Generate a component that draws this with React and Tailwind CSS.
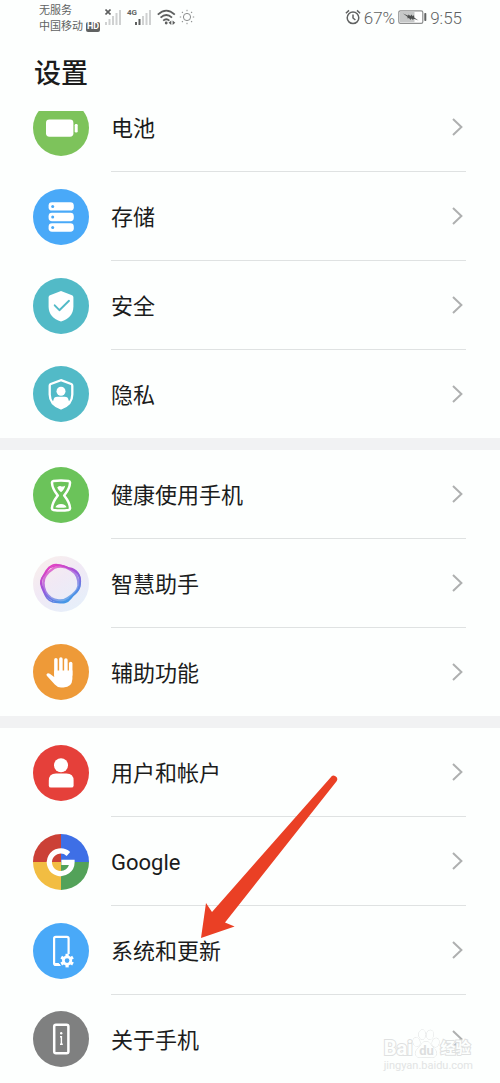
import React from "react";

const SHIELD = "M28 13 L39 17.2 Q40.4 17.8 40.4 19.4 V28.5 C40.4 36 35.8 41 28 43.6 C20.2 41 15.6 36 15.6 28.5 V19.4 Q15.6 17.8 17 17.2 Z";

function Disc({ color, children }) {
  return (
    <svg viewBox="0 0 56 56" className="size-14 shrink-0" aria-hidden="true">
      <circle cx="28" cy="28" r="28" fill={color} />
      {children}
    </svg>
  );
}

const BatteryIcon = () => (
  <Disc color="#7dc35b">
    <rect x="13" y="19.5" width="27.4" height="17.2" rx="3.4" fill="#fff" />
    <rect x="41.7" y="24" width="3" height="8.4" rx="1.2" fill="#fff" />
  </Disc>
);

const StorageIcon = () => (
  <Disc color="#49a9f8">
    {[13.2, 23.8, 34.3].map((y) => (
      <g key={y}>
        <rect x="15.6" y={y} width="25.2" height="8.4" rx="3.4" fill="#fff" />
        <circle cx="19.7" cy={y + 4.2} r="1.5" fill="#49a9f8" />
      </g>
    ))}
  </Disc>
);

const SecurityIcon = () => (
  <Disc color="#52bac7">
    <path d={SHIELD} fill="#fff" />
    <path d="M21.7 27.3 L26.4 32.2 L36 22.8" fill="none" stroke="#52bac7" strokeWidth="1.9" strokeLinecap="round" strokeLinejoin="round" />
  </Disc>
);

const PrivacyIcon = () => (
  <Disc color="#52bac7">
    <path d="M28 14.2 L38.2 18 Q39.3 18.5 39.3 19.8 V28.5 C39.3 35.4 35.2 39.8 28 42.4 C20.8 39.8 16.7 35.4 16.7 28.5 V19.8 Q16.7 18.5 17.8 18 Z" fill="none" stroke="#fff" strokeWidth="2.3" />
    <circle cx="28" cy="25.2" r="4.5" fill="#fff" />
    <path d="M20.4 34.2 Q20.8 30.8 24.4 30.8 H31.6 Q35.2 30.8 35.6 34.2 L36.6 36.4 Q33 40.6 28 42.6 Q23 40.6 19.4 36.4 Z" fill="#fff" />
  </Disc>
);

const HourglassIcon = () => (
  <Disc color="#6bc35a">
    <path d="M20.4 14 Q28 12.9 35.6 14 Q37.2 14.3 37 16 C36.7 21.8 34.4 24.4 31.2 28.5 C34.4 32.6 36.7 35.2 37 41 Q37.2 42.7 35.6 43 Q28 44.1 20.4 43 Q18.8 42.7 19 41 C19.3 35.2 21.6 32.6 24.8 28.5 C21.6 24.4 19.3 21.8 19 16 Q18.8 14.3 20.4 14 Z" fill="none" stroke="#fff" strokeWidth="2.5" strokeLinejoin="round" />
    <path d="M24.2 20.5 Q26.5 18.5 28.5 19.4 Q31 20 32.2 18.6 Q31.8 22.4 28 25.2 Q25.3 23.3 24.2 20.5 Z" fill="#fff" />
    <path d="M22.4 40.2 Q23.4 37.4 28 37 Q32.6 37.4 33.6 40.2 Q28 41.2 22.4 40.2 Z" fill="#fff" />
  </Disc>
);

const AssistantIcon = () => (
  <svg viewBox="0 0 56 56" className="size-14 shrink-0" aria-hidden="true">
    <defs>
      <linearGradient id="halo" x1="0" y1="0" x2="0.7" y2="1">
        <stop offset="0" stopColor="#faf0ea" />
        <stop offset="0.5" stopColor="#f1e9f5" />
        <stop offset="1" stopColor="#e6effa" />
      </linearGradient>
      <linearGradient id="ring" x1="0.2" y1="0" x2="0.75" y2="1">
        <stop offset="0" stopColor="#e83fc0" />
        <stop offset="0.45" stopColor="#9a55dc" />
        <stop offset="1" stopColor="#3a9fe8" />
      </linearGradient>
    </defs>
    <circle cx="28" cy="28" r="28" fill="url(#halo)" />
    <g fill="none" stroke="url(#ring)">
      <path d="M19 9.5 C25 6.5 29 10.5 36 12 C44 13 48 19 47 27 C47 35 42 36 38 42 C33 49 27 46 20 46 C13 44 12 38 9 32 C5 24 11 20 13 15 C15 12 16 10.5 19 9.5 Z" strokeWidth="1.6" />
      <path d="M20 10.5 C28 7.5 33 11 38 13 C45 16 49 22 46.5 31 C45 37 41 38 36 43 C31 47 25 46.5 20 44.5 C13 41 11 36 9 30 C6 22 13 18 15 13.5 C16 12 18 11 20 10.5 Z" strokeWidth="1.6" />
      <path d="M21 12 C27 9.5 32 10 38 14 C43 17 46 23 45.5 30 C44 37 38 40 34 42.5 C29 46 22 44.5 18 42 C12 38 10.5 32 10.5 27 C10 21 15 16 21 12 Z" strokeWidth="2.4" opacity="0.75" />
    </g>
  </svg>
);

const HandIcon = () => (
  <Disc color="#ee9a38">
    <g fill="none" stroke="#fff" strokeWidth="3.5" strokeLinecap="round">
      <path d="M22.9 15.8 V31" />
      <path d="M27.9 15 V30" />
      <path d="M32.9 16 V30" />
      <path d="M37.7 19.5 V31" />
    </g>
    <path d="M21.2 26.5 H39.4 V35 Q39 43.4 30.5 43.4 H28 Q24.2 43.4 21.8 40.5 L13.8 31.8 Q12.8 30.3 14.3 29.4 Q15.4 28.8 16.8 29.7 L21.2 33 Z" fill="#fff" />
  </Disc>
);

const UserIcon = () => (
  <Disc color="#e5403a">
    <circle cx="28" cy="20.2" r="7" fill="#fff" />
    <path d="M15.8 35.8 Q15.8 28.6 23 28.6 H33.4 Q40.6 28.6 40.6 35.8 V40.4 Q40.6 42.6 38.4 42.6 H18 Q15.8 42.6 15.8 40.4 Z" fill="#fff" />
  </Disc>
);

const GoogleIcon = () => (
  <svg viewBox="0 0 56 56" className="size-14 shrink-0" aria-hidden="true">
    <path d="M28 28 V0 A28 28 0 0 0 0 28 Z" fill="#cb4036" />
    <path d="M28 28 H56 A28 28 0 0 0 28 0 Z" fill="#3e6fe6" />
    <path d="M28 28 V56 A28 28 0 0 0 56 28 Z" fill="#53a259" />
    <path d="M28 28 H0 A28 28 0 0 0 28 56 Z" fill="#f2bd42" />
    <path d="M35.4 20 A11.3 11.3 0 1 0 39 28.4 H28.4" fill="none" stroke="#fff" strokeWidth="5.2" />
  </svg>
);

const SystemIcon = () => (
  <Disc color="#49a9f8">
    <path d="M35.6 31 V15.5 Q35.6 13.8 33.9 13.8 H22.8 Q21.1 13.8 21.1 15.5 V40.3 Q21.1 42 22.8 42 H27" fill="none" stroke="#fff" strokeWidth="2.2" />
    <path d="M21 40 H25.6 L28 43.1 H23 Z" fill="#fff" />
    <circle cx="34.1" cy="37.6" r="6.6" fill="#49a9f8" />
    <circle cx="34.1" cy="37.6" r="3.7" fill="none" stroke="#fff" strokeWidth="2.7" />
    <g stroke="#fff" strokeWidth="3.2">
      {[0, 60, 120, 180, 240, 300].map((a) => (
        <path key={a} d="M34.1 33.6 V30.8" transform={`rotate(${a} 34.1 37.6)`} />
      ))}
    </g>
  </Disc>
);

const AboutIcon = () => (
  <Disc color="#7f8080">
    <rect x="21.2" y="13.8" width="14.2" height="28.4" rx="1.8" fill="none" stroke="#fff" strokeWidth="2.5" />
    <circle cx="28.2" cy="22.2" r="1.2" fill="#fff" />
    <path d="M27 25.8 H28.4 V33.2 M27 33.2 H29.8" fill="none" stroke="#fff" strokeWidth="1.4" />
  </Disc>
);

const GROUPS = [
  [
    ["电池", BatteryIcon],
    ["存储", StorageIcon],
    ["安全", SecurityIcon],
    ["隐私", PrivacyIcon],
  ],
  [
    ["健康使用手机", HourglassIcon],
    ["智慧助手", AssistantIcon],
    ["辅助功能", HandIcon],
  ],
  [
    ["用户和帐户", UserIcon],
    ["Google", GoogleIcon],
    ["系统和更新", SystemIcon],
    ["关于手机", AboutIcon],
  ],
];

function Row({ label, Icon }) {
  return (
    <li className="group">
      <a href="#" className="flex items-center gap-[22px] pr-[34px] pl-[33px]">
        <Icon />
        <span className="flex h-[89px] flex-1 items-center justify-between border-b border-[#dfe2e2] group-last:h-[88px] group-last:border-b-0">
          <span className="pt-1 text-[22px] leading-8">{label}</span>
          <svg viewBox="0 0 16 24" className="h-6 w-4" fill="none" stroke="#aeb0b0" strokeWidth="2" aria-hidden="true">
            <path d="M3 4 L11.4 12 L3 20" />
          </svg>
        </span>
      </a>
    </li>
  );
}

function Signal({ active }) {
  return (
    <svg viewBox="0 0 17 16" className="h-4 w-[17px]" aria-hidden="true">
      {[3, 6, 9, 12, 15].map((h, i) => (
        <rect key={h} x={i * 3.5} y={16 - h} width="2" height={h} fill={i < active ? "#5d5f5f" : "#cfd1d1"} />
      ))}
    </svg>
  );
}

function StatusBar() {
  return (
    <div className="flex h-[34px] items-center justify-between pr-[38px] pl-[39px] text-[#606262]">
      <div className="flex items-center">
        <div className="pt-[3px] text-[11px] leading-4">
          <div>无服务</div>
          <div className="flex items-center gap-[3px]">
            <span>中国移动</span>
            <span className="flex h-[10px] w-[14px] items-center justify-center rounded-xs bg-[#606262] text-[9px] leading-none font-bold text-white">HD</span>
          </div>
        </div>
        <div className="relative ml-[5px] flex">
          <svg viewBox="0 0 6 6" className="absolute top-0 left-0 size-[6px]" stroke="#5d5f5f" strokeWidth="1.6" aria-hidden="true">
            <path d="M0.5 0.5 L5.5 5.5 M5.5 0.5 L0.5 5.5" />
          </svg>
          <Signal active={0} />
        </div>
        <div className="relative ml-[5px] flex pl-2">
          <span className="absolute top-0 left-0 text-[8px] leading-none font-bold">4G</span>
          <Signal active={2} />
        </div>
        <svg viewBox="0 0 19 16" className="ml-[5px] h-4 w-[19px]" fill="none" stroke="#5d5f5f" strokeWidth="1.8" aria-hidden="true">
          <path d="M0.8 5.6 Q9.3 -2.4 17.8 5.6" />
          <path d="M3.6 8.7 Q9.3 3.4 15 8.7" />
          <path d="M6.2 11.6 Q9.3 8.9 12.4 11.6" />
          <circle cx="9.2" cy="14" r="1.4" fill="#5d5f5f" stroke="none" />
          <path d="M14.3 11.5 L11.6 13.8 L14.3 16 Z M15.6 11.5 L18.3 13.8 L15.6 16 Z" fill="#5d5f5f" stroke="none" />
        </svg>
        <svg viewBox="0 0 16 16" className="ml-[3px] size-4" fill="none" stroke="#8a8c8c" aria-hidden="true">
          <circle cx="8" cy="8" r="3.6" />
          {[0, 45, 90, 135, 180, 225, 270, 315].map((a) => (
            <path key={a} d="M8 0.8 V2.2" transform={`rotate(${a} 8 8)`} />
          ))}
        </svg>
      </div>
      <div className="flex items-center gap-[3px] text-[17px] leading-6 font-light">
        <svg viewBox="0 0 16 16" className="size-4" fill="none" stroke="#606262" strokeWidth="1.5" aria-hidden="true">
          <circle cx="8" cy="8.8" r="5.8" />
          <path d="M8 5.4 V9 L10.4 11 M0.9 4.2 L4 1.4 M15.1 4.2 L12 1.4" />
        </svg>
        <span className="pt-px">67%</span>
        <svg viewBox="0 0 29 16" className="h-4 w-[29px]" aria-hidden="true">
          <rect x="0.8" y="1.8" width="24" height="12.6" rx="1.6" fill="#fff" stroke="#8d8f8f" strokeWidth="1.2" />
          <rect x="2" y="3" width="14.5" height="10.2" fill="#c6c8c8" />
          <path d="M5 4.6 L10.2 6.8 L10.2 5.4 L12.6 7 L13.2 5.4 L14.8 7.2 L16 6 L16.2 8.4 L20.5 11.4 L15.8 9.8 L15 11 L13.4 9.4 L12.4 11 L11 9 L9.6 9.4 L9.4 7.8 Z" fill="#4d4f4f" />
          <rect x="26.3" y="4" width="2" height="8" rx="0.8" fill="#606262" />
        </svg>
        <span className="pt-px">9:55</span>
      </div>
    </div>
  );
}

function Watermark() {
  return (
    <div className="pointer-events-none absolute right-[27px] bottom-[11px] text-[#e2e4e4]" aria-hidden="true">
      <div className="flex items-center text-[#fdfffe] [-webkit-text-stroke:2px_#dfe1e1] [paint-order:stroke_fill]">
        <span className="text-[20px] leading-6 font-bold">Bai</span>
        <span className="relative -mt-2 flex">
          <svg viewBox="0 0 28 30" className="h-[30px] w-7" fill="#fdfffe" stroke="#dfe1e1" strokeWidth="1">
            <ellipse cx="4.5" cy="13" rx="3.4" ry="4.4" transform="rotate(-15 4.5 13)" />
            <ellipse cx="10.2" cy="5.6" rx="3.4" ry="4.8" />
            <ellipse cx="18" cy="5.8" rx="3.4" ry="4.6" transform="rotate(10 18 5.8)" />
            <ellipse cx="23.6" cy="13.6" rx="3.4" ry="4.4" transform="rotate(15 23.6 13.6)" />
            <path d="M14 12.5 C18 12.5 19 17 22 19.5 C27 24 24 29 19 28.5 Q14 27.6 9 28.5 C4 29 1 24 6 19.5 C9 17 10 12.5 14 12.5 Z" />
          </svg>
          <span className="absolute inset-x-0 bottom-0 text-center text-[13px] leading-4 font-bold text-[#dcdede] [-webkit-text-stroke:0]">du</span>
        </span>
        <span className="text-[15px] leading-6 font-bold">经验</span>
      </div>
      <div className="text-[11px] leading-3">jingyan.baidu.com</div>
    </div>
  );
}

export default function App() {
  return (
    <div className="relative overflow-hidden bg-[#fdfffe] font-['Roboto','Noto_Sans_CJK_SC',sans-serif] text-[#1b1c1c]">
      <header>
        <StatusBar />
        <h1 className="flex h-[77px] items-center pt-[2px] pl-[34px] text-[27px] leading-10 font-medium">设置</h1>
      </header>
      <main className="overflow-hidden">
        <div className="-mt-7 flex flex-col gap-3 bg-[#f1f2f3]">
          {GROUPS.map((rows, i) => (
            <ul key={i} className="bg-[#fdfffe]">
              {rows.map(([label, Icon]) => (
                <Row key={label} label={label} Icon={Icon} />
              ))}
            </ul>
          ))}
        </div>
      </main>
      <Watermark />
      <svg viewBox="0 0 140 168" className="pointer-events-none absolute top-[773px] left-[199px] h-[168px] w-[140px]" fill="#ea4025" aria-hidden="true">
        <path d="M2 165 L7 130 L13 139 L131.6 4.4 A3.4 3.4 0 0 1 137.6 8.2 L26 149.5 L35.6 153.4 Z" />
      </svg>
    </div>
  );
}
